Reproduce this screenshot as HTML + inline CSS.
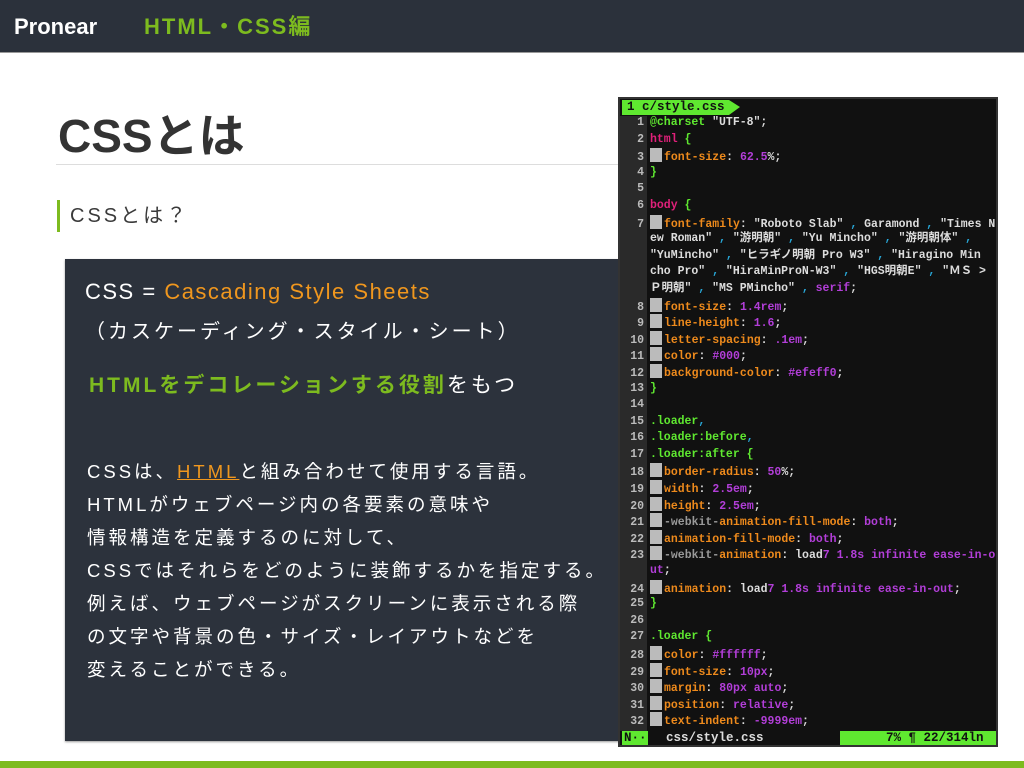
<!DOCTYPE html>
<html><head><meta charset="utf-8"><style>
*{margin:0;padding:0;box-sizing:border-box}
body{width:1024px;height:768px;background:#fff;position:relative;overflow:hidden;font-family:"Liberation Sans","Noto Sans CJK JP",sans-serif}
.top{position:absolute;left:0;top:0;width:1024px;height:53px;background:#2b313b;border-bottom:1px solid #999}
.top .a{position:absolute;left:14px;top:12px;color:#fff;font-size:22px;font-weight:bold;line-height:30px}
.top .b{position:absolute;left:144px;top:12px;color:#7dbb1f;font-size:22px;font-weight:bold;line-height:30px;letter-spacing:2px}
h1{position:absolute;left:58px;top:100px;font-size:46px;color:#333;font-weight:bold}
.hr{position:absolute;left:56px;top:164px;width:570px;height:1px;background:#ddd}
.sub{position:absolute;left:57px;top:200px;border-left:3px solid #7dbb1f;padding-left:10px;font-size:20px;color:#3a3a3a;height:32px;line-height:32px;letter-spacing:3px}
.panel{position:absolute;left:65px;top:259px;width:560px;height:482px;background:#2c323c;box-shadow:0 1px 2px #999;color:#fff}
.panel .l1{position:absolute;left:20px;top:20px;font-size:22px;letter-spacing:1.5px}
.or{color:#f0971e}
.panel .l2{position:absolute;left:20px;top:56px;font-size:20px;letter-spacing:3px}
.panel .l3{position:absolute;left:24px;top:110px;font-size:21px;letter-spacing:3px}
.g{color:#7dbb1f;font-weight:bold}
.panel .body{position:absolute;left:22px;top:196px;font-size:18.5px;line-height:33px;letter-spacing:3px;white-space:nowrap}
.u{color:#f0971e;text-decoration:underline}
.bar{position:absolute;left:0;top:761px;width:1024px;height:7px;background:#7dbb1f}
.term{position:absolute;left:618px;top:97px;width:380px;height:650px;background:#111;border:2px solid #333;overflow:hidden;font-family:"Liberation Mono","Noto Sans CJK JP",monospace;font-weight:bold;font-size:11.5px}
.tab{position:absolute;left:2px;top:1px;width:107px;height:15px;background:#5fe830;color:#111;line-height:15px;padding-left:5px;font-size:12.5px}
.tri{position:absolute;left:109px;top:1px;border-left:11px solid #5fe830;border-top:7px solid transparent;border-bottom:8px solid transparent}
.gut{position:absolute;left:0;top:17px;width:27px;height:615px;background:#2a2a2a}
.code{position:absolute;left:0;top:16px;color:#ddd}
.code div{height:16.6px;line-height:16.6px;white-space:pre;overflow:hidden}
.n{display:inline-block;width:24px;text-align:right;color:#bbb;margin-right:6px}
.blk{display:inline-block;width:12px;height:14px;background:#bbb;vertical-align:-2px;margin-right:2px}
.o{color:#ee8a1c}.p{color:#b23ed8}.gr{color:#5fe830}.m{color:#e0207a}.c{color:#28a8d8}.gy{color:#999}
.st{position:absolute;left:2px;top:632px;width:374px;height:15px;background:#111;font-size:12.5px;line-height:15px}
.st .n1{position:absolute;left:0;top:0;width:26px;height:15px;background:#5fe830;color:#111;padding-left:2px}
.st .f{position:absolute;left:44px;color:#ddd}
.st .r{position:absolute;left:218px;width:156px;height:15px;background:#5fe830;color:#111;padding-left:46px}
</style></head><body>
<div class="top"><span class="a">Pronear</span><span class="b">HTML・CSS編</span></div>
<h1>CSSとは</h1>
<div class="hr"></div>
<div class="sub">CSSとは？</div>
<div class="panel">
<div class="l1">CSS = <span class="or">Cascading Style Sheets</span></div>
<div class="l2">（カスケーディング・スタイル・シート）</div>
<div class="l3"><span class="g">HTMLをデコレーションする役割</span>をもつ</div>
<div class="body">CSSは、<span class="u">HTML</span>と組み合わせて使用する言語。<br>HTMLがウェブページ内の各要素の意味や<br>情報構造を定義するのに対して、<br>CSSではそれらをどのように装飾するかを指定する。<br>例えば、ウェブページがスクリーンに表示される際<br>の文字や背景の色・サイズ・レイアウトなどを<br>変えることができる。</div>
</div>
<div class="term">
<div class="tab">1 c/style.css</div><div class="tri"></div>
<div class="gut"></div>
<div class="code"><div><span class="n">1</span><span class="gr">@charset</span> "UTF-8";</div><div><span class="n">2</span><span class="m">html</span> <span class="gr">{</span></div><div><span class="n">3</span><span class="blk"></span><span class="o">font-size</span>: <span class="p">62.5</span>%;</div><div><span class="n">4</span><span class="gr">}</span></div><div><span class="n">5</span></div><div><span class="n">6</span><span class="m">body</span> <span class="gr">{</span></div><div><span class="n">7</span><span class="blk"></span><span class="o">font-family</span>: "Roboto Slab" <span class="c">,</span> Garamond <span class="c">,</span> "Times N</div><div><span class="n"></span>ew Roman" <span class="c">,</span> "游明朝" <span class="c">,</span> "Yu Mincho" <span class="c">,</span> "游明朝体" <span class="c">,</span></div><div><span class="n"></span>"YuMincho" <span class="c">,</span> "ヒラギノ明朝 Pro W3" <span class="c">,</span> "Hiragino Min</div><div><span class="n"></span>cho Pro" <span class="c">,</span> "HiraMinProN-W3" <span class="c">,</span> "HGS明朝E" <span class="c">,</span> "ＭＳ &gt;</div><div><span class="n"></span>Ｐ明朝" <span class="c">,</span> "MS PMincho" <span class="c">,</span> <span class="p">serif</span>;</div><div><span class="n">8</span><span class="blk"></span><span class="o">font-size</span>: <span class="p">1.4rem</span>;</div><div><span class="n">9</span><span class="blk"></span><span class="o">line-height</span>: <span class="p">1.6</span>;</div><div><span class="n">10</span><span class="blk"></span><span class="o">letter-spacing</span>: <span class="p">.1em</span>;</div><div><span class="n">11</span><span class="blk"></span><span class="o">color</span>: <span class="p">#000</span>;</div><div><span class="n">12</span><span class="blk"></span><span class="o">background-color</span>: <span class="p">#efeff0</span>;</div><div><span class="n">13</span><span class="gr">}</span></div><div><span class="n">14</span></div><div><span class="n">15</span><span class="gr">.loader</span><span class="c">,</span></div><div><span class="n">16</span><span class="gr">.loader:before</span><span class="c">,</span></div><div><span class="n">17</span><span class="gr">.loader:after {</span></div><div><span class="n">18</span><span class="blk"></span><span class="o">border-radius</span>: <span class="p">50</span>%;</div><div><span class="n">19</span><span class="blk"></span><span class="o">width</span>: <span class="p">2.5em</span>;</div><div><span class="n">20</span><span class="blk"></span><span class="o">height</span>: <span class="p">2.5em</span>;</div><div><span class="n">21</span><span class="blk"></span><span class="gy">-webkit-</span><span class="o">animation-fill-mode</span>: <span class="p">both</span>;</div><div><span class="n">22</span><span class="blk"></span><span class="o">animation-fill-mode</span>: <span class="p">both</span>;</div><div><span class="n">23</span><span class="blk"></span><span class="gy">-webkit-</span><span class="o">animation</span>: load<span class="p">7 1.8s infinite ease-in-o</span></div><div><span class="n"></span><span class="p">ut</span>;</div><div><span class="n">24</span><span class="blk"></span><span class="o">animation</span>: load<span class="p">7 1.8s infinite ease-in-out</span>;</div><div><span class="n">25</span><span class="gr">}</span></div><div><span class="n">26</span></div><div><span class="n">27</span><span class="gr">.loader {</span></div><div><span class="n">28</span><span class="blk"></span><span class="o">color</span>: <span class="p">#ffffff</span>;</div><div><span class="n">29</span><span class="blk"></span><span class="o">font-size</span>: <span class="p">10px</span>;</div><div><span class="n">30</span><span class="blk"></span><span class="o">margin</span>: <span class="p">80px auto</span>;</div><div><span class="n">31</span><span class="blk"></span><span class="o">position</span>: <span class="p">relative</span>;</div><div><span class="n">32</span><span class="blk"></span><span class="o">text-indent</span>: <span class="p">-9999em</span>;</div></div>
<div class="st"><span class="n1">N··</span><span class="f">css/style.css</span><span class="r">7% ¶  22/314ln :  1</span></div>
</div>
<div class="bar"></div>
</body></html>
